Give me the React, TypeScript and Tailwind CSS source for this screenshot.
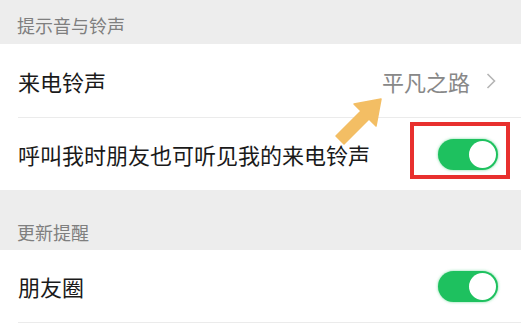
import React from "react";

const font = { fontFamily: '"Noto Sans CJK SC", "Noto Sans", sans-serif' };

function Toggle() {
  return (
    <div className="flex h-[31px] w-[60px] items-center justify-end rounded-full bg-[#1ec15f] p-[2px] shadow-[0_0_3px_rgba(30,193,95,0.6)]">
      <div className="h-[27px] w-[27px] rounded-full bg-white" />
    </div>
  );
}

export default function App() {
  return (
    <div className="relative w-[521px] h-[323px] overflow-hidden bg-white" style={font}>
      <div className="flex h-[44px] items-end bg-[#ededed] pb-[10px] pl-[17px]">
        <span className="text-[18px] leading-[18px] text-[#7f7f7f]">提示音与铃声</span>
      </div>
      <div className="flex h-[73px] items-center justify-between pl-[18px] pr-[25px]">
        <span className="text-[22px] leading-[24px] text-[#1a1a1a]">来电铃声</span>
        <div className="flex items-center gap-[16px]">
          <span className="text-[22px] leading-[24px] text-[#888888]">平凡之路</span>
          <svg width="10" height="16" viewBox="0 0 10 16">
            <polyline points="1.5,1 8.5,8 1.5,15" fill="none" stroke="#b5b5b5" strokeWidth="1.6" />
          </svg>
        </div>
      </div>
      <div className="ml-[18px] h-px bg-[#ebebeb]" />
      <div className="flex h-[72px] items-center justify-between pl-[18px] pr-[23px]">
        <span className="text-[22px] leading-[24px] text-[#1a1a1a]">呼叫我时朋友也可听见我的来电铃声</span>
        <Toggle />
      </div>
      <div className="flex h-[60px] items-end bg-[#ededed] pb-[9px] pl-[17px]">
        <span className="text-[18px] leading-[18px] text-[#7f7f7f]">更新提醒</span>
      </div>
      <div className="flex h-[72px] items-center justify-between pl-[18px] pr-[23px]">
        <span className="text-[22px] leading-[24px] text-[#1a1a1a]">朋友圈</span>
        <Toggle />
      </div>
      <div className="ml-[18px] h-px bg-[#ebebeb]" />

      <div className="absolute left-[410px] top-[122px] h-[57px] w-[100px] border-[4px] border-[#e8302e]" />
      <svg className="absolute left-0 top-0" width="521" height="323" viewBox="0 0 521 323">
        <polygon
          points="381,99 376,126 369,119 344,144 336,136 361,111 354,104"
          fill="#f3be64"
          stroke="#f3be64"
          strokeWidth="1.5"
          strokeLinejoin="round"
        />
      </svg>
    </div>
  );
}
